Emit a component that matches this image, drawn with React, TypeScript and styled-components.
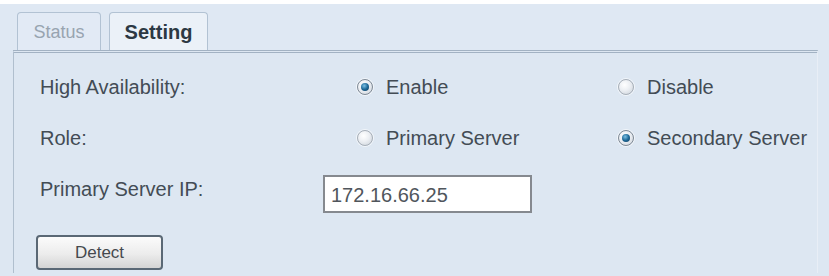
import * as React from 'react';
import styled, { createGlobalStyle } from 'styled-components';

const GlobalStyle = createGlobalStyle`
  html, body {
    margin: 0;
    padding: 0;
    background: #dde7f2;
    font-family: "Liberation Sans", Arial, sans-serif;
  }
`;

const Page = styled.div`
  width: 829px;
  height: 276px;
  overflow: hidden;
  border-top: 4px solid #ffffff;
  box-sizing: border-box;
  background: #dde7f2;
`;

const TabBar = styled.div`
  display: flex;
  align-items: flex-end;
  gap: 8px;
  height: 46px;
  padding-left: 17px;
  background: #dfe8f3;
`;

const Tab = styled.div<{ $active?: boolean; $width: number }>`
  display: flex;
  align-items: center;
  justify-content: center;
  box-sizing: border-box;
  width: ${(p) => p.$width}px;
  height: 38px;
  border: 1px solid #b2c2d3;
  border-bottom: none;
  border-radius: 4px 4px 0 0;
  background: ${(p) => (p.$active ? '#ebf1f8' : '#e2eaf5')};
  color: ${(p) => (p.$active ? '#2c3843' : '#98a4b0')};
  font-size: ${(p) => (p.$active ? '20px' : '18px')};
  font-weight: ${(p) => (p.$active ? 700 : 400)};
  padding-top: 1px;
`;

const Panel = styled.div`
  margin: 0 11px 0 13px;
  height: 223px;
  box-sizing: border-box;
  border-top: 3px double #a2b2c3;
  border-left: 1px solid #b0bfce;
  border-right: 1px solid #e8eef6;
  padding: 9px 0 0 26px;
  color: #434c55;
  font-size: 20px;
`;

const Row = styled.div`
  display: flex;
  align-items: center;
  height: 51px;
`;

const Label = styled.div<{ $width: number }>`
  width: ${(p) => p.$width}px;
  flex-shrink: 0;
`;

const Option = styled.label`
  display: flex;
  align-items: center;
  gap: 13px;
  width: 261px;
  flex-shrink: 0;
`;

const Radio = styled.span<{ $checked?: boolean }>`
  position: relative;
  display: inline-block;
  width: 16px;
  height: 16px;
  box-sizing: border-box;
  border-radius: 50%;
  border: 1px solid ${(p) => (p.$checked ? '#7f8a96' : '#a7afb8')};
  background: radial-gradient(circle at 40% 35%, #ffffff 0%, #eceff3 45%, #c9d0d8 100%);
  box-shadow: 0 0 0 1px rgba(255, 255, 255, 0.6);
  margin-top: -2px;

  &::after {
    content: '';
    display: ${(p) => (p.$checked ? 'block' : 'none')};
    position: absolute;
    left: 3px;
    top: 3px;
    width: 8px;
    height: 8px;
    border-radius: 50%;
    background: radial-gradient(circle at 40% 35%, #7cc0e4 0%, #1f6a98 50%, #0b3658 100%);
  }
`;

const TextInput = styled.input`
  box-sizing: border-box;
  width: 209px;
  height: 38px;
  margin-top: 9px;
  border: 2px solid #85898f;
  background: #ffffff;
  padding: 2px 0 0 6px;
  font-family: "Liberation Sans", Arial, sans-serif;
  font-size: 20px;
  color: #50565c;
  outline: none;
`;

const Button = styled.button`
  box-sizing: border-box;
  width: 127px;
  height: 35px;
  margin: 20px 0 0 -4px;
  border: 2px solid #5a6875;
  border-radius: 4px;
  background: linear-gradient(#fbfbfb 0%, #ececec 55%, #d4d4d4 100%);
  font-family: "Liberation Sans", Arial, sans-serif;
  font-size: 17px;
  color: #45494e;
  padding: 0;
`;

export default function App() {
  return (
    <Page>
      <GlobalStyle />
      <TabBar>
        <Tab $width={84}>Status</Tab>
        <Tab $width={99} $active>
          Setting
        </Tab>
      </TabBar>
      <Panel>
        <Row>
          <Label $width={317}>High Availability:</Label>
          <Option>
            <Radio $checked />
            Enable
          </Option>
          <Option>
            <Radio />
            Disable
          </Option>
        </Row>
        <Row>
          <Label $width={317}>Role:</Label>
          <Option>
            <Radio />
            Primary Server
          </Option>
          <Option>
            <Radio $checked />
            Secondary Server
          </Option>
        </Row>
        <Row>
          <Label $width={283}>Primary Server IP:</Label>
          <TextInput defaultValue="172.16.66.25" />
        </Row>
        <Button>Detect</Button>
      </Panel>
    </Page>
  );
}
